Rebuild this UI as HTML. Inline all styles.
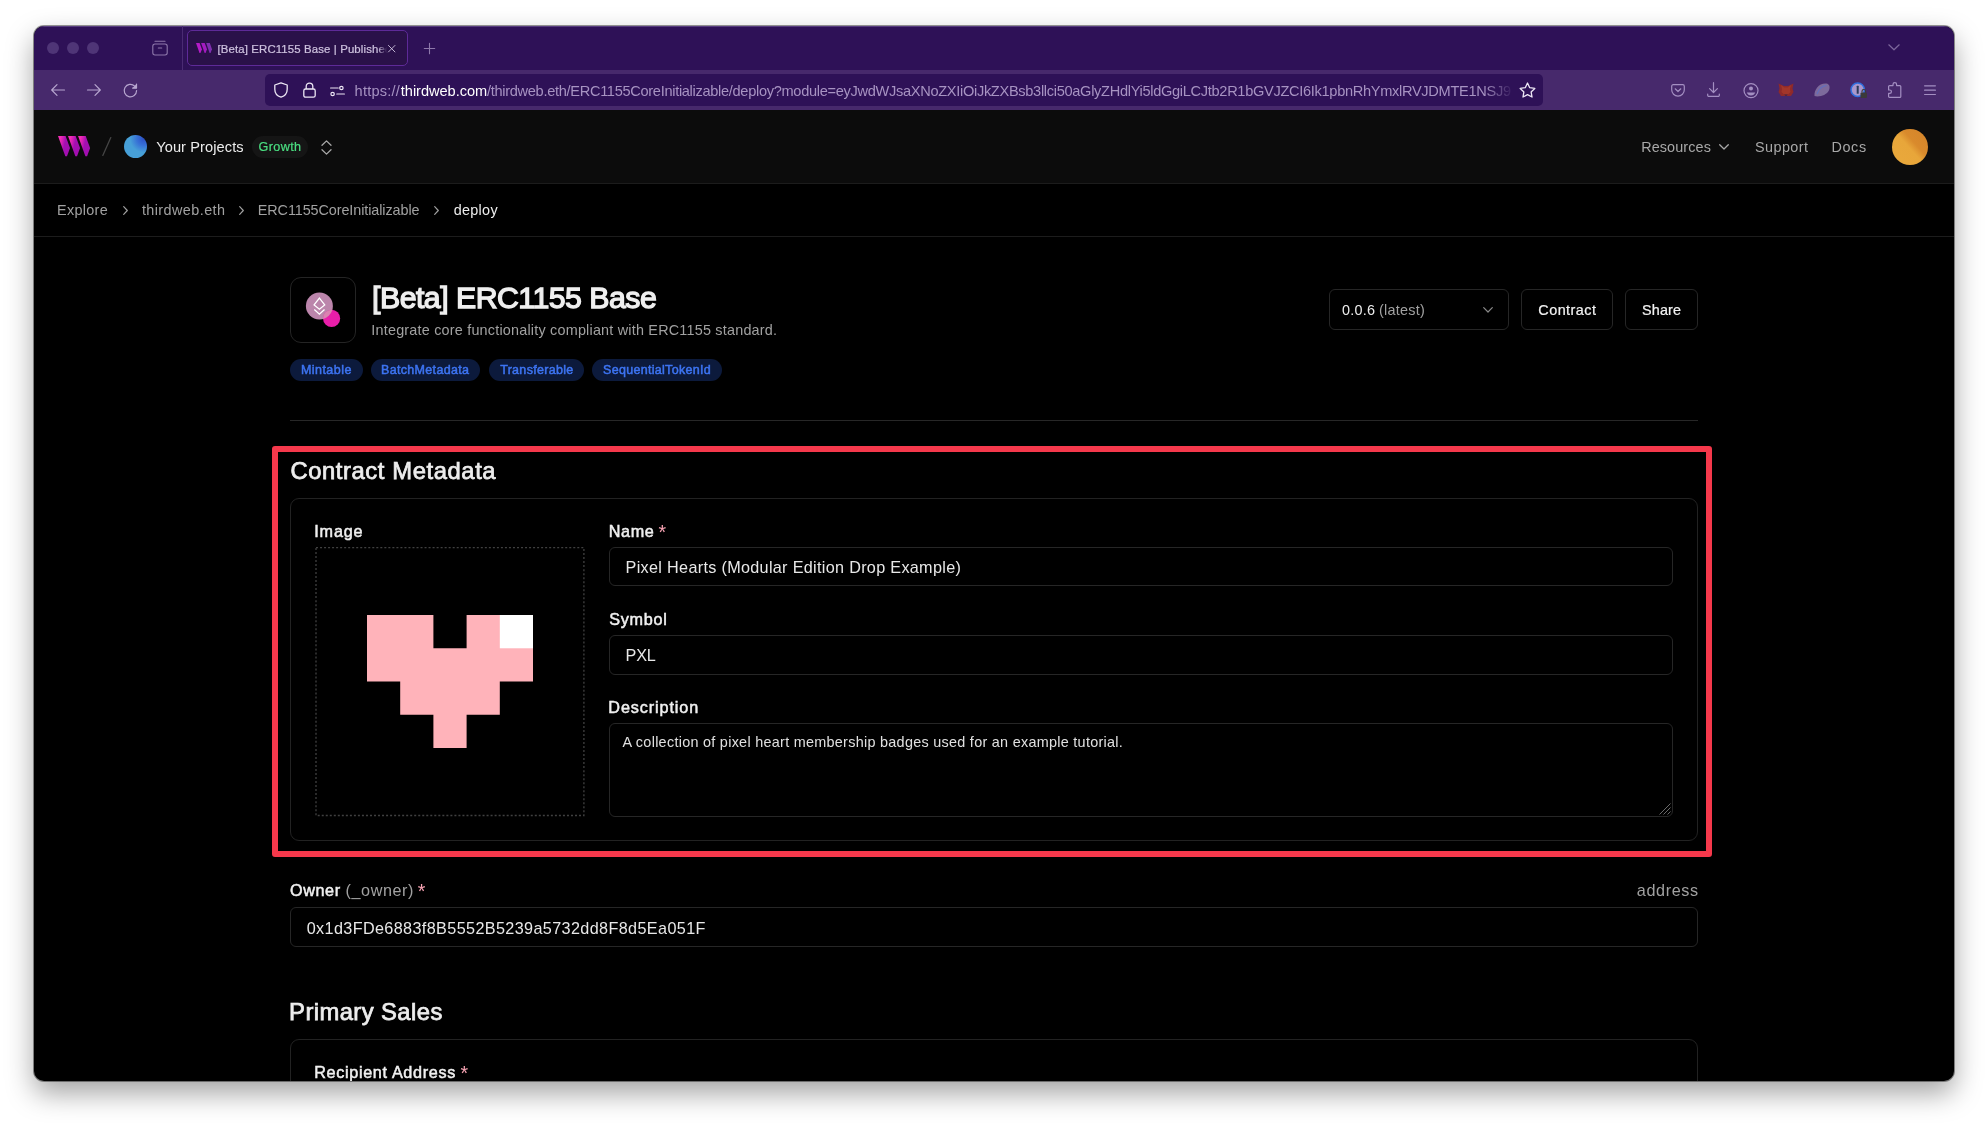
<!DOCTYPE html>
<html lang="en">
<head>
<meta charset="utf-8">
<title>[Beta] ERC1155 Base | Published Smart Contract</title>
<style>
html,body{margin:0;padding:0;}
body{width:1988px;height:1123px;background:#fff;position:relative;overflow:hidden;font-family:"Liberation Sans",sans-serif;}
#win{position:absolute;left:34px;top:26px;width:1920px;height:1055px;border-radius:10px;overflow:hidden;background:#000;
  box-shadow:0 0 0 1px rgba(0,0,0,0.40),0 12px 28px rgba(0,0,0,0.37);}
#pg{position:absolute;left:-34px;top:-26px;width:1988px;height:1123px;will-change:transform;}
.a{position:absolute;box-sizing:border-box;}
.t{position:absolute;white-space:nowrap;line-height:1;font-family:"Liberation Sans",sans-serif;}
svg{position:absolute;overflow:visible;}
.pill{position:absolute;box-sizing:border-box;background:#0c1a3c;border-radius:11px;height:22px;top:358.6px;}
.box{position:absolute;box-sizing:border-box;border:1px solid #262626;border-radius:6px;background:#000;}
</style>
</head>
<body>
<div id="win"><div id="pg">

<!-- ===== browser chrome ===== -->
<div class="a" style="left:34px;top:26px;width:1920px;height:44px;background:#2e1157;"></div>
<div class="a" style="left:34px;top:26px;width:1920px;height:1px;background:#62478a;opacity:.8"></div>
<div class="a" style="left:34px;top:70px;width:1920px;height:40px;background:#47296c;"></div>
<div class="a" style="left:182px;top:26px;width:1px;height:44px;background:#4a2b73;"></div>
<!-- traffic lights -->
<div class="a" style="left:47px;top:42px;width:12px;height:12px;border-radius:50%;background:#4f3577;"></div>
<div class="a" style="left:67px;top:42px;width:12px;height:12px;border-radius:50%;background:#4f3577;"></div>
<div class="a" style="left:87px;top:42px;width:12px;height:12px;border-radius:50%;background:#4f3577;"></div>
<!-- firefox view icon -->
<svg style="left:152px;top:40px" width="16" height="16" viewBox="0 0 16 16" fill="none" stroke="#8e78ab" stroke-width="1.1" stroke-linecap="round">
  <path d="M3 1.2h10"/><rect x="0.8" y="4" width="14.4" height="11" rx="2.2"/><path d="M6.3 8h3.4"/>
</svg>
<!-- tab -->
<div class="a" style="left:187px;top:30px;width:221px;height:36px;border-radius:5px;background:#2a1149;border:1px solid #5e2a98;"></div>
<svg style="left:196px;top:43px" width="16" height="10" viewBox="0 0 32 20">
  <path d="M0 0h7.2l4.6 12.4-2.9 7.6H7z" fill="#b51cc8"/>
  <path d="M10.2 0h7.2l4.6 12.4-2.9 7.6h-1.9z" fill="#a31cc0"/>
  <path d="M20.4 0h7.2L32 12.4 29.1 20h-1.9z" fill="#7f2fb0"/>
</svg>
<div class="a" style="left:378px;top:40px;width:29px;height:18px;background:linear-gradient(90deg,rgba(42,17,73,0) 0%,#2a1149 32%,#2a1149 100%);z-index:3"></div>
<svg style="left:388.200px;top:45px;z-index:4" width="7.400" height="7.400" viewBox="0 0 8 8" stroke="#cfc3df" stroke-width="1" stroke-linecap="round"><path d="M0.5 0.5l7 7M7.5 0.5l-7 7"/></svg>
<svg style="left:424px;top:43px" width="11" height="11" viewBox="0 0 11 11" stroke="#8e78ab" stroke-width="1.1" stroke-linecap="round"><path d="M5.5 0.3v10.4M0.3 5.5h10.4"/></svg>
<svg style="left:1888px;top:44px" width="12" height="7" viewBox="0 0 12 7" fill="none" stroke="#7d679c" stroke-width="1.2" stroke-linecap="round" stroke-linejoin="round"><path d="M0.8 0.8L6 5.8 11.2 0.8"/></svg>

<!-- nav buttons -->
<svg style="left:51px;top:84px" width="14" height="12" viewBox="0 0 14 12" fill="none" stroke="#b7a6cf" stroke-width="1.2" stroke-linecap="round" stroke-linejoin="round"><path d="M6 0.7L0.7 6 6 11.3M0.9 6h12.6"/></svg>
<svg style="left:87px;top:84px" width="14" height="12" viewBox="0 0 14 12" fill="none" stroke="#b7a6cf" stroke-width="1.2" stroke-linecap="round" stroke-linejoin="round"><path d="M8 0.7L13.3 6 8 11.3M13.1 6H0.5"/></svg>
<svg style="left:122.5px;top:82.5px" width="15" height="15" viewBox="0 0 15 15" fill="none" stroke="#b7a6cf" stroke-width="1.2" stroke-linecap="round" stroke-linejoin="round"><path d="M13.6 7.6a6.2 6.2 0 1 1-1.9-4.5"/><path d="M13.7 0.8v4.4h-4.4" fill="#b7a6cf" stroke="none"/><path d="M13.5 1v4.1H9.6"/></svg>

<!-- url bar -->
<div class="a" style="left:265px;top:74px;width:1278px;height:32px;border-radius:5px;background:#2e1157;"></div>
<svg style="left:274px;top:82px" width="14" height="16" viewBox="0 0 14 16" fill="none" stroke="#ece6f4" stroke-width="1.3" stroke-linejoin="round"><path d="M7 0.8L13.2 3v4.2c0 4-2.6 6.8-6.2 8-3.6-1.200-6.2-4-6.2-8V3z"/></svg>
<svg style="left:302.5px;top:82px" width="13" height="16" viewBox="0 0 13 16" fill="none" stroke="#ece6f4" stroke-width="1.3" stroke-linejoin="round"><rect x="0.8" y="7" width="11.4" height="8.2" rx="1.8"/><path d="M3.2 7V4.4a3.3 3.3 0 0 1 6.600 0V7"/></svg>
<svg style="left:329.500px;top:85.500px" width="15" height="10" viewBox="0 0 15 10" fill="none" stroke="#ece6f4" stroke-width="1.2" stroke-linecap="round"><path d="M0.600 2h7.600"/><circle cx="11.400" cy="2" r="1.700"/><path d="M6.800 8h7.600"/><circle cx="2.600" cy="8" r="1.700"/></svg>
<svg style="left:1519px;top:82px" width="17" height="16" viewBox="0 0 24 23" fill="none" stroke="#ece6f4" stroke-width="1.900" stroke-linejoin="round"><path d="M12 1.500l3.200 6.700 7.300 1-5.300 5.100 1.300 7.300L12 18.100l-6.500 3.500 1.300-7.300L1.500 9.200l7.300-1z"/></svg>
<!-- fade at end of url -->
<div class="a" style="left:1484px;top:78px;width:30px;height:24px;background:linear-gradient(90deg,rgba(46,17,87,0) 0%,rgba(46,17,87,0.85) 85%,#2e1157 100%);z-index:5"></div>

<!-- right toolbar icons -->
<svg style="left:1671px;top:84px" width="14" height="13" viewBox="0 0 14 13" fill="none" stroke="#a48fc2" stroke-width="1.2" stroke-linecap="round" stroke-linejoin="round"><path d="M2.200 0.700h9.600a1.500 1.500 0 0 1 1.500 1.500v3.600a6.300 6.300 0 0 1-12.600 0V2.200A1.500 1.500 0 0 1 2.200 0.700z"/><path d="M4.200 4.800L7 7.500l2.800-2.700"/></svg>
<svg style="left:1707px;top:82px" width="13" height="15" viewBox="0 0 13 15" fill="none" stroke="#a48fc2" stroke-width="1.200" stroke-linecap="round" stroke-linejoin="round"><path d="M6.500 0.700v9.600M2.600 6.600l3.900 3.900 3.900-3.900"/><path d="M0.700 12v1.200a1.200 1.200 0 0 0 1.200 1.200h9.200a1.200 1.200 0 0 0 1.200-1.200V12"/></svg>
<svg style="left:1742.500px;top:82.500px" width="16" height="16" viewBox="0 0 16 16" fill="none" stroke="#a48fc2" stroke-width="1.200"><circle cx="8" cy="7.600" r="7"/><circle cx="8" cy="5.600" r="2" fill="#a48fc2" stroke="none"/><path d="M3.800 9.600h8.400a4.500 4.500 0 0 1-8.400 0z" fill="#a48fc2" stroke="none"/></svg>
<!-- metamask-ish -->
<svg style="left:1778px;top:83px" width="16" height="14" viewBox="0 0 16 14"><path d="M0.500 0.500L6 3h4l5.500-2.500-1 5 1 3.500-2.500 4H3L0.500 9l1-3.500z" fill="#8f2a2a"/><path d="M3 2l3.500 2.500h3L13 2l-1 4 0.500 3-2.500 2.500H6L3.500 9 4 6z" fill="#a83a2a" opacity=".8"/><path d="M6 11.500h4L8 13z" fill="#3a2440"/></svg>
<!-- rainbow/feather-ish -->
<svg style="left:1814px;top:83px" width="16" height="14" viewBox="0 0 16 14"><path d="M0.500 13C0 7 4.500 0.500 11.500 0.500c3 0 4.500 2 4 5-0.500 3.500-4 6.500-8.500 7.500-2.500 0.600-5 0.600-6.500 0z" fill="#7d6a9c"/><path d="M3 11c1.500-4 5-8 9.500-8.500" stroke="#5f6fc0" stroke-width="1.200" fill="none"/></svg>
<!-- 1password-ish -->
<svg style="left:1850px;top:82px" width="18" height="17" viewBox="0 0 18 17"><circle cx="7.700" cy="7.700" r="6.700" fill="#a997cc" stroke="#2f6fe0" stroke-width="1.500"/><rect x="6.700" y="3.700" width="2" height="8" rx="0.500" fill="#2a3a5a"/><rect x="10.500" y="10.500" width="6.500" height="5.500" rx="1" fill="#3b3a3a"/><path d="M12 10.500V9.300a1.800 1.800 0 0 1 3.600 0v1.200" stroke="#3b3a3a" stroke-width="1.100" fill="none"/></svg>
<!-- puzzle -->
<svg style="left:1888px;top:82px" width="14" height="16" viewBox="0 0 14 16" fill="none" stroke="#a48fc2" stroke-width="1.200" stroke-linejoin="round"><path d="M5 3.600V2.500a1.800 1.800 0 0 1 3.600 0v1.100h3.200a1 1 0 0 1 1 1v9.800a1 1 0 0 1-1 1H1.600a1 1 0 0 1-1-1v-3h1.100a1.700 1.700 0 0 0 0-3.400H0.600V4.600a1 1 0 0 1 1-1z"/></svg>
<!-- hamburger -->
<svg style="left:1924px;top:84.500px" width="12" height="10" viewBox="0 0 12 10" stroke="#a48fc2" stroke-width="1.200" stroke-linecap="round"><path d="M0.600 0.800h10.800M0.600 5.200h10.800M0.600 9.500h10.800"/></svg>

<!-- ===== page ===== -->
<div class="a" style="left:34px;top:110px;width:1920px;height:73px;background:#0c0c0c;"></div>
<div class="a" style="left:34px;top:183px;width:1920px;height:1px;background:#1c1c1c;"></div>
<div class="a" style="left:34px;top:236px;width:1920px;height:1px;background:#1c1c1c;"></div>

<!-- thirdweb logo -->
<svg style="left:57.900px;top:136.400px" width="32.200" height="20.300" viewBox="0 0 32.200 20.300">
  <defs><linearGradient id="lg" gradientUnits="userSpaceOnUse" x1="2.800" y1="0" x2="8.200" y2="1.200"><stop offset="0" stop-color="#f32db5"/><stop offset="0.450" stop-color="#d41fb4"/><stop offset="1" stop-color="#a30fb1"/></linearGradient></defs>
  <path d="M0 0h7.600l4.400 11.900-3 8.400H7.300z" fill="url(#lg)"/>
  <g transform="translate(10.050 0)"><path d="M0 0h7.600l4.400 11.900-3 8.400H7.300z" fill="url(#lg)"/></g>
  <g transform="translate(20.100 0)"><path d="M0 0h7.600l4.400 11.900-3 8.400H7.300z" fill="url(#lg)"/></g>
</svg>
<svg style="left:102px;top:137px" width="10" height="19" viewBox="0 0 10 19" stroke="#454545" stroke-width="1.300" stroke-linecap="round"><path d="M8.800 0.600L0.800 18.400"/></svg>
<div class="a" style="left:123.600px;top:134.600px;width:23.800px;height:23.800px;border-radius:50%;background:radial-gradient(circle at 86% 16%,#2c50c4 0%,#3770d6 24%,#47a0d8 50%,#47a0d8 100%);"></div>
<div class="a" style="left:251.500px;top:135.500px;width:56.500px;height:22px;border-radius:11px;background:#151515;"></div>
<svg style="left:320.500px;top:139.500px" width="11" height="15" viewBox="0 0 11 15" fill="none" stroke="#a8a8a8" stroke-width="1.300" stroke-linecap="round" stroke-linejoin="round"><path d="M1 5.200L5.500 0.900 10 5.200M1 9.800l4.500 4.300L10 9.800"/></svg>
<svg style="left:1718.500px;top:144px" width="10" height="6" viewBox="0 0 10 6" fill="none" stroke="#a8a8a8" stroke-width="1.300" stroke-linecap="round" stroke-linejoin="round"><path d="M0.700 0.700L5 5 9.300 0.700"/></svg>
<div class="a" style="left:1892px;top:128.500px;width:36px;height:36px;border-radius:50%;background:linear-gradient(48deg,#eaa93c 0%,#e8a63a 48%,#d98a2c 62%,#d4842a 100%);"></div>

<!-- breadcrumb chevrons -->
<svg style="left:122.500px;top:205.500px" width="5" height="9" viewBox="0 0 5 9" fill="none" stroke="#a1a1a1" stroke-width="1.200" stroke-linecap="round" stroke-linejoin="round"><path d="M0.700 0.700L4.300 4.500 0.700 8.300"/></svg>
<svg style="left:239px;top:205.500px" width="5" height="9" viewBox="0 0 5 9" fill="none" stroke="#a1a1a1" stroke-width="1.200" stroke-linecap="round" stroke-linejoin="round"><path d="M0.700 0.700L4.300 4.500 0.700 8.300"/></svg>
<svg style="left:434px;top:205.500px" width="5" height="9" viewBox="0 0 5 9" fill="none" stroke="#a1a1a1" stroke-width="1.200" stroke-linecap="round" stroke-linejoin="round"><path d="M0.700 0.700L4.300 4.500 0.700 8.300"/></svg>

<!-- title block -->
<div class="a" style="left:290px;top:276.500px;width:66px;height:66px;border-radius:11px;border:1px solid #242424;background:#000;"></div>
<svg style="left:300px;top:288px" width="46" height="42" viewBox="0 0 46 42">
  <circle cx="19.400" cy="18" r="13.500" fill="#bb85ab"/>
  <circle cx="31.600" cy="30.400" r="8.550" fill="#e91ea9"/>
  <clipPath id="cb"><circle cx="19.400" cy="18" r="13.500"/></clipPath><circle cx="31.600" cy="30.400" r="8.550" fill="#da84b0" clip-path="url(#cb)"/>
  <g fill="none" stroke="#fff" stroke-width="1.300" stroke-linejoin="miter" stroke-linecap="butt"><path d="M19.400 10.100l5.300 6.800-5.300 4.300-5.300-4.300z"/><path d="M14.300 21.500l5.100 4.700 5.100-4.700"/></g>
</svg>
<div class="pill" style="left:290px;width:72.500px;"></div>
<div class="pill" style="left:370.800px;width:109.500px;"></div>
<div class="pill" style="left:488.500px;width:95.500px;"></div>
<div class="pill" style="left:592px;width:129.500px;"></div>

<div class="box" style="left:1329px;top:289px;width:180px;height:41px;"></div>
<svg style="left:1483px;top:307px" width="10" height="6" viewBox="0 0 10 6" fill="none" stroke="#8a8a8a" stroke-width="1.200" stroke-linecap="round" stroke-linejoin="round"><path d="M0.700 0.700L5 5 9.300 0.700"/></svg>
<div class="box" style="left:1521px;top:289px;width:92px;height:41px;"></div>
<div class="box" style="left:1625px;top:289px;width:73px;height:41px;"></div>
<div class="a" style="left:290px;top:420px;width:1408px;height:1px;background:#272727;"></div>

<!-- red highlight -->
<div class="a" style="left:272px;top:445.500px;width:1440px;height:411.500px;border:6px solid #f5384b;border-radius:3px;z-index:8;"></div>

<!-- contract metadata card -->
<div class="a" style="left:290px;top:497.500px;width:1408px;height:343.500px;border:1px solid #222;border-radius:9px;background:#000;"></div>
<svg style="left:0;top:0" width="1988" height="1123"><rect x="316" y="547.600" width="267.900" height="267.900" fill="none" stroke="#404040" stroke-width="1.300" stroke-dasharray="2 2.020"/></svg>
<!-- pixel heart -->
<svg style="left:367.100px;top:614.800px" width="166" height="133.100" viewBox="0 0 5 4" preserveAspectRatio="none">
  <path d="M0 0h2v1h1V0h2v2H4v1H3v1H2V3H1V2H0z" fill="#ffb3ba"/>
  <rect x="4" y="0" width="1" height="1" fill="#fff"/>
</svg>
<div class="box" style="left:609px;top:546.500px;width:1064px;height:39.500px;"></div>
<div class="box" style="left:609px;top:634.500px;width:1064px;height:40px;"></div>
<div class="box" style="left:609px;top:722.500px;width:1064px;height:94px;"></div>
<svg style="left:1659px;top:803px" width="12" height="12" viewBox="0 0 12 12" stroke="#6a6a6a" stroke-width="1"><path d="M11.500 0.500l-11 11M11.500 4.500l-7 7M11.500 8.500l-3 3"/></svg>

<!-- owner -->
<div class="box" style="left:290px;top:907px;width:1408px;height:40px;"></div>
<!-- primary sales card -->
<div class="a" style="left:290px;top:1039px;width:1408px;height:80px;border:1px solid #222;border-radius:9px;background:#000;"></div>

<!-- ===== text ===== -->
<span class="t" id="tabtitle" style="left:217.50px;top:44.05px;font-size:11.40px;font-weight:400;-webkit-text-stroke:0.22px currentColor;color:#cdc1de;letter-spacing:0.127px;">[Beta] ERC1155 Base | Published</span>
<span class="t" style="left:354.60px;top:84.14px;font-size:14.60px;font-weight:400;color:#a793c2;letter-spacing:0.200px;">https://</span>
<span class="t" style="left:400.80px;top:84.14px;font-size:14.60px;font-weight:400;color:#ffffff;letter-spacing:-0.036px;">thirdweb.com</span>
<span class="t" id="urlrest" style="left:487.00px;top:84.14px;font-size:14.60px;font-weight:400;color:#a793c2;letter-spacing:-0.311px;">/thirdweb.eth/ERC1155CoreInitializable/deploy?module=eyJwdWJsaXNoZXIiOiJkZXBsb3llci50aGlyZHdlYi5ldGgiLCJtb2R1bGVJZCI6Ik1pbnRhYmxlRVJDMTE1NSJ9</span>
<span class="t" style="left:156.20px;top:139.84px;font-size:14.60px;font-weight:400;color:#ededed;letter-spacing:0.100px;">Your Projects</span>
<span class="t" style="left:258.50px;top:141.33px;font-size:12.60px;font-weight:400;-webkit-text-stroke:0.22px currentColor;color:#4ade80;letter-spacing:0.400px;">Growth</span>
<span class="t" style="left:1641.20px;top:139.71px;font-size:14.40px;font-weight:400;color:#a8a8a8;letter-spacing:0.112px;">Resources</span>
<span class="t" style="left:1755.10px;top:139.71px;font-size:14.40px;font-weight:400;color:#a8a8a8;letter-spacing:0.417px;">Support</span>
<span class="t" style="left:1831.60px;top:139.71px;font-size:14.40px;font-weight:400;color:#a8a8a8;letter-spacing:0.567px;">Docs</span>
<span class="t" style="left:57.10px;top:203.01px;font-size:14.40px;font-weight:400;color:#a1a1a1;letter-spacing:0.300px;">Explore</span>
<span class="t" style="left:141.90px;top:203.01px;font-size:14.40px;font-weight:400;color:#a1a1a1;letter-spacing:0.427px;">thirdweb.eth</span>
<span class="t" style="left:257.80px;top:203.01px;font-size:14.40px;font-weight:400;color:#a1a1a1;letter-spacing:-0.087px;">ERC1155CoreInitializable</span>
<span class="t" style="left:453.70px;top:203.01px;font-size:14.40px;font-weight:400;color:#ededed;letter-spacing:0.300px;">deploy</span>
<span class="t" style="left:372.10px;top:282.95px;font-size:30.30px;font-weight:400;-webkit-text-stroke:1.3px currentColor;color:#efefef;letter-spacing:-0.528px;">[Beta] ERC1155 Base</span>
<span class="t" style="left:371.30px;top:323.11px;font-size:14.40px;font-weight:400;color:#a1a1a1;letter-spacing:0.207px;">Integrate core functionality compliant with ERC1155 standard.</span>
<span class="t" style="left:300.90px;top:364.22px;font-size:12.50px;font-weight:400;-webkit-text-stroke:0.5px currentColor;color:#3d74f2;letter-spacing:0.457px;">Mintable</span>
<span class="t" style="left:381.00px;top:364.22px;font-size:12.50px;font-weight:400;-webkit-text-stroke:0.5px currentColor;color:#3d74f2;letter-spacing:0.325px;">BatchMetadata</span>
<span class="t" style="left:500.20px;top:364.22px;font-size:12.50px;font-weight:400;-webkit-text-stroke:0.5px currentColor;color:#3d74f2;letter-spacing:0.300px;">Transferable</span>
<span class="t" style="left:603.10px;top:364.22px;font-size:12.50px;font-weight:400;-webkit-text-stroke:0.5px currentColor;color:#3d74f2;letter-spacing:0.294px;">SequentialTokenId</span>
<span class="t" style="left:1342.10px;top:302.61px;font-size:14.40px;font-weight:400;color:#ededed;letter-spacing:0.200px;">0.0.6</span>
<span class="t" style="left:1379.00px;top:302.61px;font-size:14.40px;font-weight:400;color:#a1a1a1;letter-spacing:0.257px;">(latest)</span>
<span class="t" style="left:1538.30px;top:302.61px;font-size:14.40px;font-weight:400;-webkit-text-stroke:0.22px currentColor;color:#f2f2f2;letter-spacing:0.471px;">Contract</span>
<span class="t" style="left:1642.10px;top:302.61px;font-size:14.40px;font-weight:400;-webkit-text-stroke:0.22px currentColor;color:#f2f2f2;letter-spacing:0.125px;">Share</span>
<span class="t" style="left:290.40px;top:459.25px;font-size:23.80px;font-weight:400;-webkit-text-stroke:0.75px currentColor;color:#ededed;letter-spacing:0.588px;">Contract Metadata</span>
<span class="t" style="left:314.30px;top:522.89px;font-size:16.20px;font-weight:400;-webkit-text-stroke:0.5px currentColor;color:#f0f0f0;letter-spacing:0.800px;">Image</span>
<span class="t" style="left:608.70px;top:522.89px;font-size:16.20px;font-weight:400;-webkit-text-stroke:0.5px currentColor;color:#f0f0f0;letter-spacing:0.667px;">Name</span>
<span class="t" style="left:658.60px;top:522.59px;font-size:19.50px;font-weight:400;color:#f7a3b3;letter-spacing:0.000px;">*</span>
<span class="t" style="left:625.60px;top:558.89px;font-size:16.20px;font-weight:400;color:#e8e8e8;letter-spacing:0.314px;">Pixel Hearts (Modular Edition Drop Example)</span>
<span class="t" style="left:609.20px;top:610.99px;font-size:16.20px;font-weight:400;-webkit-text-stroke:0.5px currentColor;color:#f0f0f0;letter-spacing:0.740px;">Symbol</span>
<span class="t" style="left:625.60px;top:646.79px;font-size:16.20px;font-weight:400;color:#e8e8e8;letter-spacing:-0.200px;">PXL</span>
<span class="t" style="left:608.30px;top:699.09px;font-size:16.20px;font-weight:400;-webkit-text-stroke:0.5px currentColor;color:#f0f0f0;letter-spacing:0.890px;">Description</span>
<span class="t" style="left:622.50px;top:735.21px;font-size:14.40px;font-weight:400;color:#e0e0e0;letter-spacing:0.286px;">A collection of pixel heart membership badges used for an example tutorial.</span>
<span class="t" style="left:290.10px;top:882.49px;font-size:16.20px;font-weight:400;-webkit-text-stroke:0.5px currentColor;color:#f0f0f0;letter-spacing:0.575px;">Owner</span>
<span class="t" style="left:345.60px;top:882.49px;font-size:16.20px;font-weight:400;color:#a1a1a1;letter-spacing:0.557px;">(_owner)</span>
<span class="t" style="left:417.80px;top:882.19px;font-size:19.50px;font-weight:400;color:#f7a3b3;letter-spacing:0.000px;">*</span>
<span class="t" style="left:1636.80px;top:881.89px;font-size:16.20px;font-weight:400;color:#a1a1a1;letter-spacing:0.633px;">address</span>
<span class="t" style="left:306.70px;top:919.69px;font-size:16.20px;font-weight:400;color:#e8e8e8;letter-spacing:0.373px;">0x1d3FDe6883f8B5552B5239a5732dd8F8d5Ea051F</span>
<span class="t" style="left:289.10px;top:1000.05px;font-size:23.80px;font-weight:400;-webkit-text-stroke:0.75px currentColor;color:#ededed;letter-spacing:0.425px;">Primary Sales</span>
<span class="t" style="left:314.20px;top:1064.09px;font-size:16.20px;font-weight:400;-webkit-text-stroke:0.5px currentColor;color:#f0f0f0;letter-spacing:0.663px;">Recipient Address</span>
<span class="t" style="left:460.50px;top:1063.79px;font-size:19.50px;font-weight:400;color:#f7a3b3;letter-spacing:0.000px;">*</span>
</div></div>
</body>
</html>
